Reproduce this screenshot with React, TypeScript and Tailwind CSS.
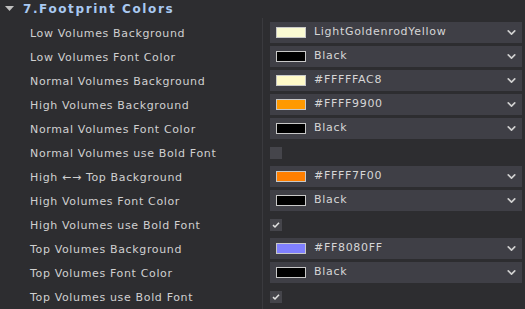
import { ChevronDown } from "lucide-react";

type Row =
  | { label: string; kind: "color"; swatch: string; value: string }
  | { label: string; kind: "check"; checked: boolean };

const rows: Row[] = [
  { label: "Low Volumes Background", kind: "color", swatch: "#fafad2", value: "LightGoldenrodYellow" },
  { label: "Low Volumes Font Color", kind: "color", swatch: "#000000", value: "Black" },
  { label: "Normal Volumes Background", kind: "color", swatch: "#fffac8", value: "#FFFFFAC8" },
  { label: "High Volumes Background", kind: "color", swatch: "#ff9900", value: "#FFFF9900" },
  { label: "Normal Volumes Font Color", kind: "color", swatch: "#000000", value: "Black" },
  { label: "Normal Volumes use Bold Font", kind: "check", checked: false },
  { label: "High \u2190\u2192 Top Background", kind: "color", swatch: "#ff7f00", value: "#FFFF7F00" },
  { label: "High Volumes Font Color", kind: "color", swatch: "#000000", value: "Black" },
  { label: "High Volumes use Bold Font", kind: "check", checked: true },
  { label: "Top Volumes Background", kind: "color", swatch: "#8080ff", value: "#FF8080FF" },
  { label: "Top Volumes Font Color", kind: "color", swatch: "#000000", value: "Black" },
  { label: "Top Volumes use Bold Font", kind: "check", checked: true },
];

function ColorSelect({ swatch, value }: { swatch: string; value: string }) {
  return (
    <div className="flex items-center h-[21px] bg-[#3f3f46] pl-[6px] pr-[4px]">
      <span className="w-[30px] h-[11px] border border-[#c8c8c8]" style={{ backgroundColor: swatch }} />
      <span className="ml-[8px] flex-1 text-[#d6d6d6] tracking-[0.7px]">{value}</span>
      <ChevronDown size={13} strokeWidth={3} className="text-[#d0d0d0]" />
    </div>
  );
}

function Check({ checked }: { checked: boolean }) {
  return (
    <div className="w-[12px] h-[12px] bg-[#45454b] flex items-center justify-center">
      {checked && (
        <svg width="8" height="8" viewBox="0 0 8 8">
          <path d="M1 4.2 L3 6 L7 1.8" stroke="#e0e0e0" strokeWidth="1.6" fill="none" />
        </svg>
      )}
    </div>
  );
}

export default function App() {
  return (
    <div className="w-[525px] h-[309px] bg-[#2d2d30] overflow-hidden text-[11px] text-[#d0d0d0] font-['DejaVu_Sans',sans-serif]">
      <div className="flex items-center h-[18px] pl-[5px]">
        <svg width="9" height="6" viewBox="0 0 9 6">
          <path d="M0 0 H9 L4.5 5 Z" fill="#c0c0c0" />
        </svg>
        <span className="ml-[9px] text-[12px] font-bold tracking-[1.6px] text-[#a9c9f2]">7.Footprint Colors</span>
      </div>
      <div className="flex">
        <div className="w-[262px] pt-[4px]">
          {rows.map((r) => (
            <div key={r.label} className="h-[24px] flex items-center pl-[30px] tracking-[0.65px]">
              {r.label}
            </div>
          ))}
        </div>
        <div className="w-px bg-[#3a3a3e]" />
        <div className="flex-1 pl-[7px] pr-[3px] pt-[4px]">
          {rows.map((r) => (
            <div key={r.label} className="h-[24px] pb-[3px] flex flex-col justify-center">
              {r.kind === "color" ? <ColorSelect swatch={r.swatch} value={r.value} /> : <Check checked={r.checked} />}
            </div>
          ))}
        </div>
      </div>
    </div>
  );
}
